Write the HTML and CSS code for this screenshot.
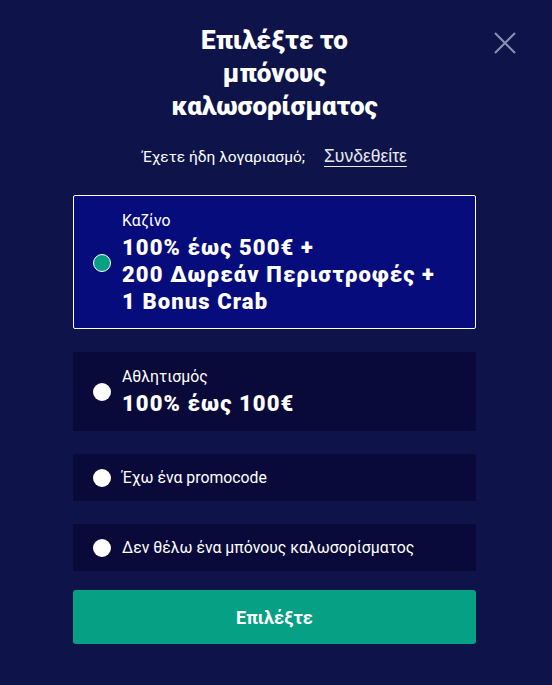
FILE: index.html
```html
<!DOCTYPE html>
<html lang="el">
<head>
  <meta charset="UTF-8">
  <meta name="viewport" content="width=device-width, initial-scale=1.0">
  <link rel="stylesheet" href="styles.css">
  <title>Επιλέξτε το μπόνους καλωσορίσματος</title>
</head>
<body>
  <div class="modal">
    <button class="close-btn" aria-label="Κλείσιμο">
      <svg width="22" height="22" viewBox="0 0 22 22"><path d="M1 1 L21 21 M21 1 L1 21" stroke="#8b90b3" stroke-width="2" fill="none"/></svg>
    </button>

    <h1 class="title">Επιλέξτε το<br>μπόνους<br>καλωσορίσματος</h1>
    <p class="login-line">Έχετε ήδη λογαριασμό;<a href="#">Συνδεθείτε</a></p>

    <div class="options">
      <label class="option selected">
        <span class="radio"></span>
        <span class="option-text">
          <span class="option-label">Καζίνο</span>
          <span class="option-value">100% έως 500€ +<br>200 Δωρεάν Περιστροφές +<br>1 Bonus Crab</span>
        </span>
      </label>

      <label class="option">
        <span class="radio"></span>
        <span class="option-text">
          <span class="option-label">Αθλητισμός</span>
          <span class="option-value">100% έως 100€</span>
        </span>
      </label>

      <label class="option small">
        <span class="radio"></span>
        <span class="option-label">Έχω ένα promocode</span>
      </label>

      <label class="option small">
        <span class="radio"></span>
        <span class="option-label">Δεν θέλω ένα μπόνους καλωσορίσματος</span>
      </label>
    </div>

    <button class="submit-btn">Επιλέξτε</button>
  </div>
</body>
</html>
```

FILE: styles.css
```css
body {
  margin: 0;
  padding: 0;
  background-color: #0e1449;
  font-family: Roboto, "Noto Sans", Arial, sans-serif;
  color: #fff;
}

.modal {
  position: relative;
  width: 403px;
  margin: 0 0 0 73px;
  padding-top: 24px;
}

.close-btn {
  position: absolute;
  top: 32px;
  right: -40px;
  background: none;
  border: none;
  padding: 0;
  cursor: pointer;
}

.title {
  margin: 0;
  text-align: center;
  font-size: 26px;
  font-weight: 900;
  line-height: 33px;
}

.login-line {
  margin: 24px 0 0;
  text-align: center;
  font-size: 15.5px;
  line-height: 18px;
  color: #fff;
}

.login-line a {
  margin-left: 19px;
  font-family: "Liberation Sans", Arial, sans-serif;
  font-size: 17.5px;
  line-height: 18px;
  color: #e8e9f2;
  text-decoration: underline;
  text-underline-offset: 4px;
}

.options {
  display: flex;
  flex-direction: column;
  gap: 23px;
  margin-top: 29px;
}

.option {
  display: flex;
  align-items: center;
  gap: 11px;
  padding: 13px 19px;
  background-color: #0a0a3a;
  border: 1px solid transparent;
  cursor: pointer;
}

.option.selected {
  padding-top: 14px;
  padding-bottom: 13px;
  background-color: #060c7c;
  border-color: #fff;
  border-radius: 2px;
}

.option.small {
  padding-top: 12px;
  padding-bottom: 11px;
}

.radio {
  flex: none;
  width: 18px;
  height: 18px;
  border-radius: 50%;
  background-color: #fff;
}

.selected .radio {
  width: 16px;
  height: 16px;
  background-color: #06a085;
  border: 1px solid #fff;
}

.option-text {
  display: flex;
  flex-direction: column;
}

.option-label {
  font-size: 15.8px;
  line-height: 22px;
}

.option-value {
  margin-top: 2px;
  font-size: 22px;
  font-weight: 900;
  letter-spacing: 1.1px;
  line-height: 27px;
}

.submit-btn {
  display: block;
  width: 100%;
  height: 54px;
  margin-top: 19px;
  background-color: #06a085;
  color: #fff;
  border: none;
  border-radius: 3px;
  font-family: Roboto, "Noto Sans", Arial, sans-serif;
  font-size: 18px;
  font-weight: 700;
  cursor: pointer;
}
```
